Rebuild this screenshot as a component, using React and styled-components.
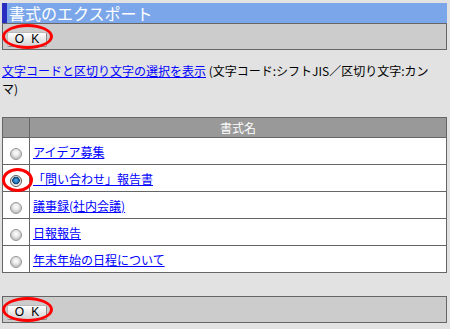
import React, { useState } from "react";
import styled, { createGlobalStyle } from "styled-components";

const formats = [
  "アイデア募集",
  "「問い合わせ」報告書",
  "議事録(社内会議)",
  "日報報告",
  "年末年始の日程について",
];

const GlobalStyle = createGlobalStyle`
  html, body {
    margin: 0;
    padding: 0;
    background: #e1e2e1;
  }
  body {
    font-family: "Noto Sans CJK JP", "Liberation Sans", sans-serif;
    font-size: 12px;
    color: #000;
  }
`;

const App = () => {
  const [selected, setSelected] = useState(1);

  return (
    <Page>
      <GlobalStyle />
      <TitleBar>書式のエクスポート</TitleBar>
      <Toolbar>
        <OkWrap>
          <OkButton>O K</OkButton>
          <Marker />
        </OkWrap>
      </Toolbar>

      <Info>
        <a href="#">文字コードと区切り文字の選択を表示</a> (文字コード:シフトJIS／区切り文字:カンマ)
      </Info>

      <Table>
        <thead>
          <tr>
            <HeadCell $narrow />
            <HeadCell>書式名</HeadCell>
          </tr>
        </thead>
        <tbody>
          {formats.map((name, i) => (
            <tr key={name}>
              <RadioCell onClick={() => setSelected(i)}>
                <RadioWrap>
                  <Radio $checked={selected === i} />
                  {i === 1 && <RadioMarker />}
                </RadioWrap>
              </RadioCell>
              <NameCell>
                <a href="#">{name}</a>
              </NameCell>
            </tr>
          ))}
        </tbody>
      </Table>

      <Toolbar $bottom>
        <OkWrap>
          <OkButton>O K</OkButton>
          <Marker />
        </OkWrap>
      </Toolbar>
    </Page>
  );
};

const Page = styled.div`
  padding: 3px 3px 0 2px;
  display: flex;
  flex-direction: column;

  a {
    color: #0000ff;
    text-decoration: underline;
  }
`;

const TitleBar = styled.div`
  height: 20px;
  line-height: 20px;
  background: #7ba7ea;
  border-left: 5px solid #2a2ec0;
  color: #fff;
  font-size: 16px;
  padding-left: 2px;
  box-sizing: border-box;
`;

const Toolbar = styled.div`
  height: 27px;
  box-sizing: border-box;
  border: 1px solid #666;
  background: #cccccc;
  padding: 5px 0 0 4px;
  margin-top: ${(p) => (p.$bottom ? "23px" : "0")};
`;

const OkWrap = styled.span`
  position: relative;
  display: inline-block;
`;

const OkButton = styled.button`
  width: 40px;
  height: 15px;
  padding: 0 0 0 2px;
  border: 1px solid #888;
  border-top-color: #bbb;
  border-left-color: #bbb;
  border-radius: 2px;
  background: linear-gradient(#ffffff, #e4e4e4 60%, #d4d4d4);
  font-family: "Liberation Sans", sans-serif;
  font-size: 12px;
  line-height: 13px;
  letter-spacing: 2px;
  color: #000;
`;

const Marker = styled.span`
  position: absolute;
  left: -5px;
  top: -5px;
  width: 51px;
  height: 25px;
  box-sizing: border-box;
  border: 3px solid #ff0000;
  border-radius: 50%;
  pointer-events: none;
`;

const Info = styled.p`
  margin: 12px 0 0;
  line-height: 18px;
  padding-right: 14px;
`;

const Table = styled.table`
  margin-top: 19px;
  width: 100%;
  border-collapse: collapse;
  background: #fff;
`;

const HeadCell = styled.th`
  height: 19px;
  padding: 0;
  background: #999999;
  border: 1px solid #666;
  color: #fff;
  font-weight: normal;
  text-align: center;
  width: ${(p) => (p.$narrow ? "26px" : "auto")};
`;

const RadioCell = styled.td`
  height: 26px;
  padding: 0;
  border: 1px solid #666;
  text-align: center;
  vertical-align: middle;
`;

const RadioWrap = styled.span`
  position: relative;
  display: inline-block;
  width: 12px;
  height: 12px;
  vertical-align: middle;
  margin-top: 2px;
`;

const Radio = styled.span`
  display: block;
  width: 12px;
  height: 12px;
  box-sizing: border-box;
  border-radius: 50%;
  border: 1px solid ${(p) => (p.$checked ? "#5a5a5a" : "#9a9a9a")};
  background: ${(p) =>
    p.$checked
      ? "radial-gradient(circle at 50% 45%, #5fb2e8 0, #1a6cb0 2.5px, #0d3f70 3.5px, #cfcfcf 4px, #f4f4f4 5px)"
      : "radial-gradient(circle at 50% 40%, #ffffff 0, #e8e8e8 3px, #c6c6c6 5px)"};
`;

const RadioMarker = styled.span`
  position: absolute;
  left: -8px;
  top: -7px;
  width: 31px;
  height: 24px;
  box-sizing: border-box;
  border: 3px solid #ff0000;
  border-radius: 50%;
`;

const NameCell = styled.td`
  padding: 0 0 0 3px;
  border: 1px solid #666;
  vertical-align: middle;
`;

export default App;
